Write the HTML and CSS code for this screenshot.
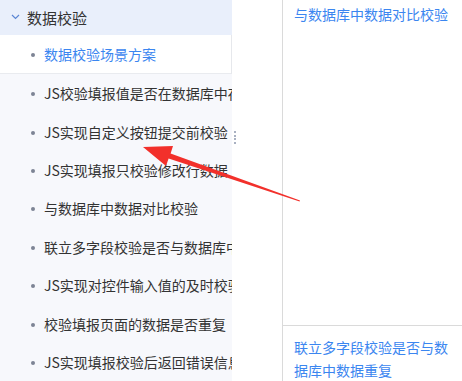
FILE: index.html
```html
<!DOCTYPE html>
<html>
<head>
<meta http-equiv="Content-Type" content="text/html; charset=utf-8"/>
<title>数据校验</title>
<link rel="stylesheet" href="styles.css">
</head>
<body>
<div class="page">
  <div class="sidebar">
    <div class="group-title">
      <svg class="chevron" width="9" height="6" viewBox="0 0 9 6"><path d="M1 1 L4.5 4.5 L8 1" fill="none" stroke="#5b86d4" stroke-width="1.2"/></svg>
      <span>数据校验</span>
    </div>
    <ul class="menu">
      <li class="active">数据校验场景方案</li>
      <li>JS校验填报值是否在数据库中存在</li>
      <li>JS实现自定义按钮提交前校验</li>
      <li>JS实现填报只校验修改行数据</li>
      <li>与数据库中数据对比校验</li>
      <li>联立多字段校验是否与数据库中数据重复</li>
      <li>JS实现对控件输入值的及时校验</li>
      <li>校验填报页面的数据是否重复</li>
      <li>JS实现填报校验后返回错误信息</li>
    </ul>
  </div>
  <div class="splitter">
    <div class="handle"><i></i><i></i><i></i><i></i></div>
  </div>
  <div class="content">
    <div class="link top">与数据库中数据对比校验</div>
    <div class="next">
      <div class="link">联立多字段校验是否与数据库中数据重复</div>
    </div>
  </div>
</div>
<svg class="arrow" width="462" height="381" viewBox="0 0 462 381">
  <polygon points="143,147 173,146 170.6,153.4 300,200.6 299.6,201.6 168.6,158.6 166,166" fill="#f2302b"/>
</svg>
</body>
</html>
```
FILE: styles.css
```css
body {
  margin: 0;
  background-color: white;
  font-family: "Noto Sans CJK SC", "Noto Sans", sans-serif;
  font-size: 14px;
  color: #333;
}

.page {
  display: flex;
  height: 381px;
  overflow: hidden;
}

.sidebar {
  width: 232px;
  flex: none;
  background-color: #f7f8fc;
  overflow: hidden;
}

.group-title {
  height: 35px;
  display: flex;
  align-items: center;
  padding-left: 11px;
  background-color: #e9effb;
  font-size: 15px;
  color: #333;
}

.chevron {
  margin-right: 7px;
  margin-top: -2px;
}

.menu {
  list-style: none;
  margin: 0;
  padding: 0;
}

.menu li {
  height: 38.4px;
  display: flex;
  align-items: center;
  padding-left: 44px;
  position: relative;
  white-space: nowrap;
  box-sizing: border-box;
}

.menu li::before {
  content: "";
  position: absolute;
  left: 31px;
  top: 50%;
  width: 4px;
  height: 4px;
  margin-top: -1px;
  border-radius: 50%;
  background-color: #7d8494;
}

.menu li.active {
  background-color: white;
  color: #3b86f0;
  border-right: 1px solid #e6e8ec;
  border-bottom: 1px solid #e9ebef;
  height: 39px;
}

.splitter {
  width: 50px;
  flex: none;
  position: relative;
}

.handle {
  position: absolute;
  left: 2px;
  top: 131px;
  display: flex;
  flex-direction: column;
  gap: 1.7px;
}

.handle i {
  display: block;
  width: 2px;
  height: 2px;
  background-color: #a9b1c2;
}

.content {
  flex: 1;
  border-left: 1px solid #dadada;
  display: flex;
  flex-direction: column;
  justify-content: space-between;
}

.link {
  color: #3b86f0;
  padding-left: 11px;
  padding-right: 10px;
}

.link.top {
  padding-top: 4px;
}

.next {
  border-top: 1px solid #dadada;
  padding-top: 10px;
  height: 56px;
  box-sizing: border-box;
}

.next .link {
  line-height: 23px;
}

.arrow {
  position: absolute;
  left: 0;
  top: 0;
  pointer-events: none;
}
```
